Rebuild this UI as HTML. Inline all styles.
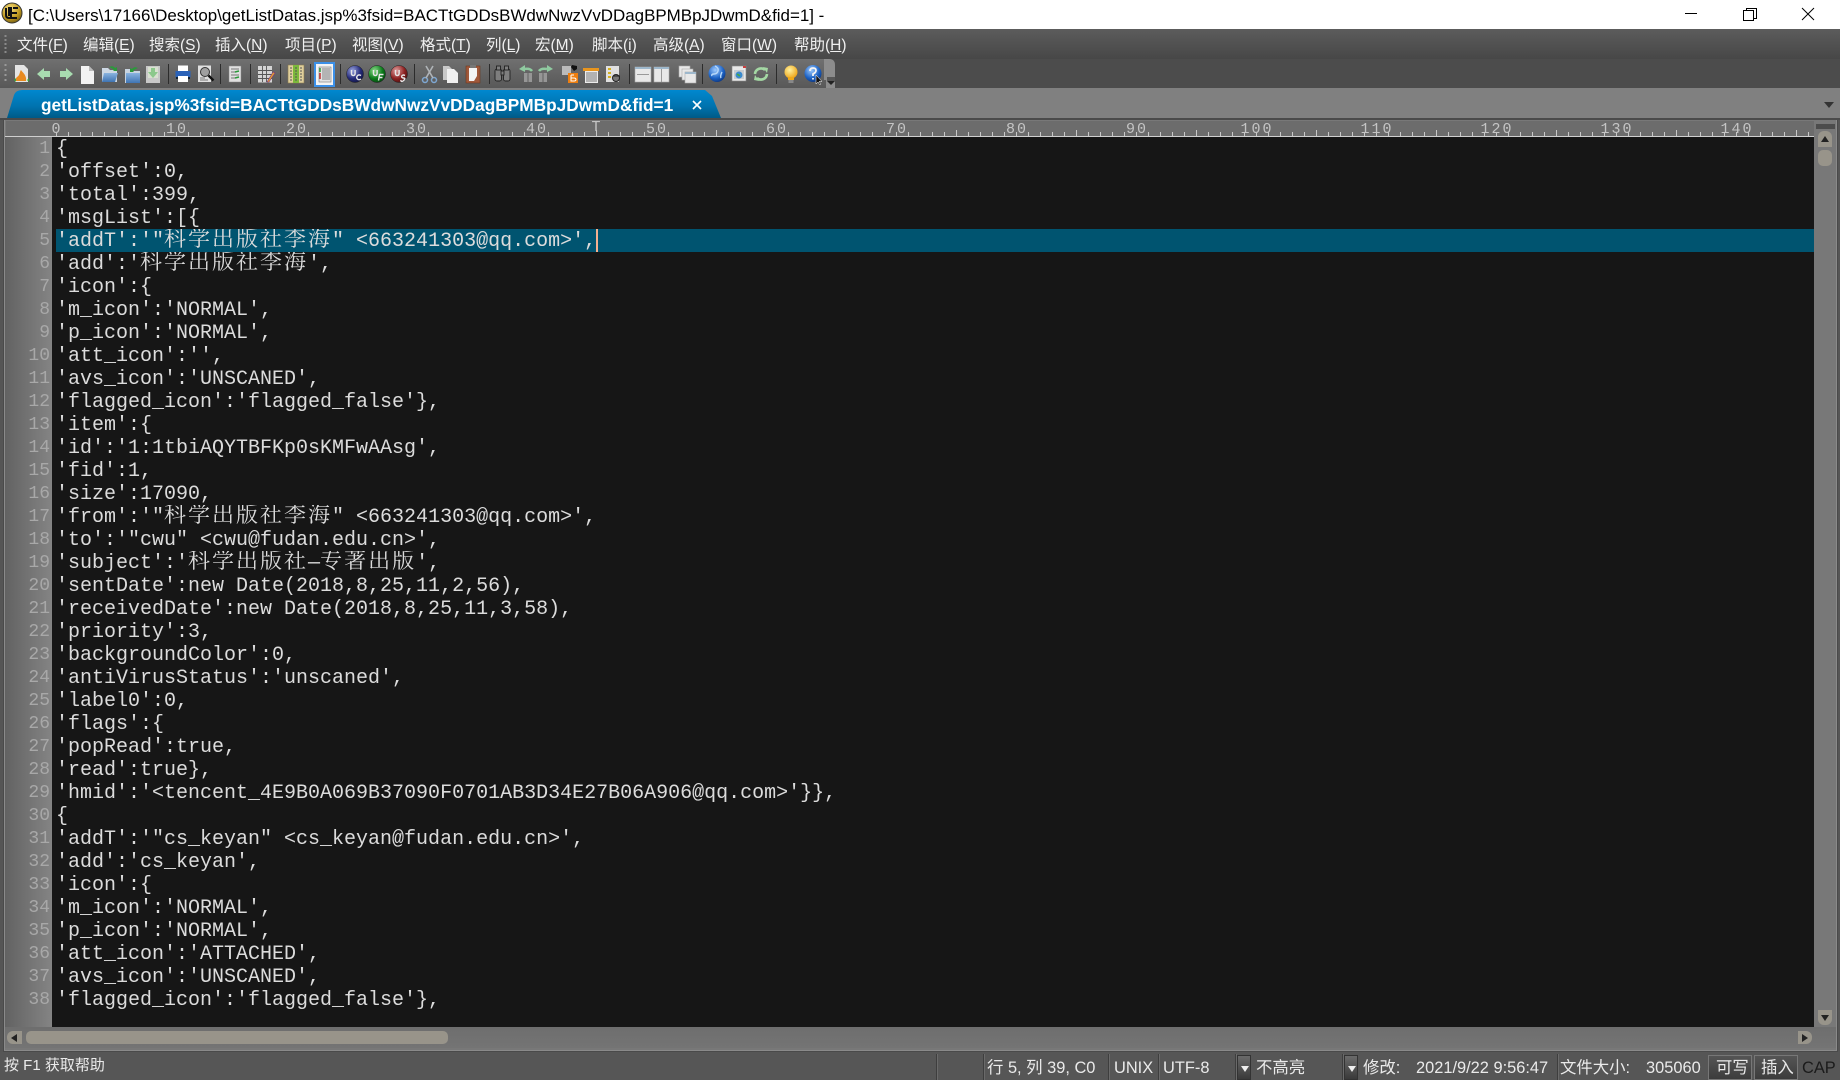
<!DOCTYPE html>
<html><head><meta charset="utf-8"><title>UltraEdit</title>
<style>
html,body{margin:0;padding:0;width:1840px;height:1080px;overflow:hidden;background:#555}
div,span{position:absolute}
.l span,.cj span,u,b{position:static}
#title{left:0;top:0;width:1840px;height:29px;background:#fff}
#ttext{left:28px;top:5px;font:16.95px/22px "Liberation Sans",sans-serif;color:#000;white-space:nowrap}
#menu{left:0;top:29px;width:1840px;height:30px;background:linear-gradient(#5c5c5c,#474747)}
.m{top:7px;font:15.5px/20px "Liberation Sans","Noto Sans CJK SC",sans-serif;color:#f0f0f0;white-space:nowrap}
.m u{text-underline-offset:1px}
#tb{left:0;top:59px;width:1840px;height:29px;background:#4c4c4c}
#tabbar{left:0;top:88px;width:1840px;height:30px;background:#808080}
#frame{left:3px;top:118px;width:1835px;height:934px;background:#787878;box-shadow:inset 0 0 0 1px #4a4a4a,inset 0 0 0 2px #8a8a8a}
#frametop{left:0;top:118px;width:1840px;height:2px;background:#4a4a4a}
#ruler{left:6px;top:121px;width:1808px;height:15px;background:#6c6c6c}
#rline{left:5px;top:136px;width:1809px;height:1px;background:#cfcfcf}
#ticks{left:56px;top:132px;width:1758px;height:4px;background:repeating-linear-gradient(90deg,#c8c8c8 0 1px,transparent 1px 12px)}
#ticks2{left:116px;top:130px;width:1698px;height:3px;background:repeating-linear-gradient(90deg,#c8c8c8 0 1px,transparent 1px 120px)}
.rn{top:122px;margin-left:1px;font:15px/15px "Liberation Mono",monospace;letter-spacing:2px;color:#c4c4c4;transform:translateX(-50%);white-space:nowrap}
#gutter{left:5px;top:137px;width:47px;height:890px;background:linear-gradient(90deg,#626262,#848484)}
#editor{left:52px;top:137px;width:1762px;height:890px;background:#161616}
#hl{left:56px;top:229px;width:1758px;height:23px;background:#005470}
#caret{left:596px;top:229px;width:2px;height:23px;background:#f4b090}
.n{left:5px;width:45px;height:23px;text-align:right;font:18px/25px "Liberation Mono",monospace;color:#a8a8a8}
.l{left:56px;height:24px;font:20px/25px "Liberation Mono",monospace;color:#dcdcdc;white-space:pre;overflow:hidden;-webkit-text-stroke:0}
.l span{font-family:"Noto Serif CJK SC",serif;font-size:22px;letter-spacing:2px;line-height:0}
#vtrack{left:1814px;top:121px;width:22px;height:906px;background:#787878}
#htrack{left:5px;top:1027px;width:1831px;height:21px;background:linear-gradient(#6e6e6e,#747474)}
.sb{background:#98948a;border-radius:5px}
#status{left:0;top:1052px;width:1840px;height:28px;background:#565656}
.s{top:5px;font:16.4px/22px "Liberation Sans","Noto Sans CJK SC",sans-serif;color:#eaeaea;white-space:nowrap}
.sep{top:2px;width:1px;height:26px;background:#3e3e3e;box-shadow:1px 0 0 #6a6a6a}
.dd{top:3px;width:14px;height:25px;background:linear-gradient(#6a6a6a,#3a3a3a);border:1px solid #333;box-sizing:border-box}
.dd:after{content:"";position:absolute;left:3px;top:10px;border:4px solid transparent;border-top:6px solid #eee}
.st{top:3px;height:25px;background:linear-gradient(#555,#3c3c3c);border:1px solid #777;box-sizing:border-box}
</style></head><body>
<div id="title">
<svg style="position:absolute;left:1px;top:2px" width="22" height="22" viewBox="0 0 22 22">
<defs><radialGradient id="ue" cx=".4" cy=".3" r=".8"><stop offset="0" stop-color="#f8e080"/><stop offset=".6" stop-color="#c09a20"/><stop offset="1" stop-color="#5c4a10"/></radialGradient></defs>
<circle cx="11" cy="11" r="10" fill="url(#ue)" stroke="#333" stroke-width="1"/>
<path d="M5 6v7c0 2 1 3 3 3h2V6H8v8M12 6h5M11 11h5M11 16h5" fill="none" stroke="#111" stroke-width="2"/>
</svg>
<div id="ttext">[C:\Users\17166\Desktop\getListDatas.jsp%3fsid=BACTtGDDsBWdwNwzVvDDagBPMBpJDwmD&amp;fid=1] -</div>
<svg style="position:absolute;left:1670px;top:0" width="170" height="29" viewBox="0 0 170 29" fill="none" stroke="#000" stroke-width="1">
<path d="M15 13.500h12"/>
<path d="M73.500 10.500h10v10h-10zM76.500 10V8.500h10v10H84"/>
<path d="M132 8l12 12M144 8l-12 12"/>
</svg>
</div>
<div id="menu">
<svg style="position:absolute;left:4px;top:5px" width="4" height="20"><path d="M1.500 1v20" stroke="#8a8a8a" stroke-width="2" stroke-dasharray="2 2"/></svg>
<div class="m" style="left:17px">文件(<u>F</u>)</div>
<div class="m" style="left:83px">编辑(<u>E</u>)</div>
<div class="m" style="left:149px">搜索(<u>S</u>)</div>
<div class="m" style="left:215px">插入(<u>N</u>)</div>
<div class="m" style="left:285px">项目(<u>P</u>)</div>
<div class="m" style="left:352px">视图(<u>V</u>)</div>
<div class="m" style="left:420px">格式(<u>T</u>)</div>
<div class="m" style="left:486px">列(<u>L</u>)</div>
<div class="m" style="left:535px">宏(<u>M</u>)</div>
<div class="m" style="left:592px">脚本(<u>i</u>)</div>
<div class="m" style="left:653px">高级(<u>A</u>)</div>
<div class="m" style="left:721px">窗口(<u>W</u>)</div>
<div class="m" style="left:794px">帮助(<u>H</u>)</div>
</div>
<div id="tb">
<svg style="position:absolute;left:0;top:0" width="840" height="29" viewBox="0 59 840 29">
<defs>
<linearGradient id="tbg" x1="0" y1="0" x2="0" y2="1"><stop offset="0" stop-color="#707070"/><stop offset="1" stop-color="#585858"/></linearGradient>
<linearGradient id="fold" x1="0" y1="0" x2="0" y2="1"><stop offset="0" stop-color="#8ab4e0"/><stop offset="1" stop-color="#3f74b4"/></linearGradient>
<radialGradient id="gb" cx=".35" cy=".3" r=".8"><stop offset="0" stop-color="#9aa4e0"/><stop offset=".6" stop-color="#242a78"/><stop offset="1" stop-color="#10143c"/></radialGradient>
<radialGradient id="gg" cx=".35" cy=".3" r=".8"><stop offset="0" stop-color="#8ada8a"/><stop offset=".6" stop-color="#0a7a1a"/><stop offset="1" stop-color="#064010"/></radialGradient>
<radialGradient id="gr" cx=".35" cy=".3" r=".8"><stop offset="0" stop-color="#e0a0a0"/><stop offset=".6" stop-color="#8c2020"/><stop offset="1" stop-color="#401010"/></radialGradient>
<radialGradient id="ge" cx=".4" cy=".3" r=".8"><stop offset="0" stop-color="#a0ccff"/><stop offset=".6" stop-color="#1c62c4"/><stop offset="1" stop-color="#0a2c70"/></radialGradient>
<radialGradient id="bulb" cx=".4" cy=".35" r=".7"><stop offset="0" stop-color="#fff2a0"/><stop offset="1" stop-color="#eda010"/></radialGradient>
</defs>
<path d="M0 59H829q5 0 5 5V88H0z" fill="url(#tbg)"/>
<path d="M824 59h5q6 0 6 6v23h-9v-8h-2z" fill="#8c8c8c"/>
<path d="M5.500 64v18" stroke="#999" stroke-width="2" stroke-dasharray="2 3"/>
<g stroke="#2c2c2c" stroke-width="1">
<path d="M168.500 64v20M220.500 64v20M250.500 64v20M280.500 64v20M310.500 64v20M340.500 64v20M414.500 64v20M489.500 64v20M629.500 64v20M702.500 64v20M776.500 64v20"/>
</g>
<!-- doc flame -->
<path d="M15 65h9l4 4v13H15z" fill="#e4e4e4"/><path d="M16 81c-1-4 2-4 3-6 1-2 1-4 2-5 1 2 6 5 5 11z" fill="#e88a20"/><path d="M14 80l2-2v4zM29 78l-2 2 2 2z" fill="#3aa53a"/>
<!-- arrows -->
<path d="M37 74l7-6v3h6v6h-6v3z" fill="#a8dcb0"/><path d="M73 74l-7-6v3h-6v6h6v3z" fill="#a8dcb0"/>
<!-- new doc -->
<path d="M81 66h8l5 5v13H81z" fill="#f2f2f2"/><path d="M89 66v5h5z" fill="#bbb"/>
<!-- folders -->
<path d="M102 68h6l2 2h7v12h-15z" fill="#cdd8e4"/><path d="M104 73h14l-3 9h-13z" fill="url(#fold)"/><path d="M109 67q4-2 6 1l2-1v4h-4l1-1q-2-2-5-3z" fill="#2a9a3a"/>
<path d="M125 69h5l1 2h9v12h-15z" fill="#c8d4e0"/><rect x="126" y="73" width="14" height="10" fill="url(#fold)"/><path d="M138 68q-4-2-6 1l-2-1v4h4l-1-1q2-2 5-3z" fill="#2a9a3a"/>
<!-- save -->
<rect x="146" y="66" width="14" height="17" fill="#c8c8c8"/><rect x="148" y="67" width="10" height="11" fill="#d8e0d0"/><path d="M151 68h4v4h3l-5 6-5-6h3z" fill="#8cc88c"/>
<!-- printer -->
<rect x="178" y="65.500" width="10" height="6" fill="#fff"/><rect x="175.500" y="71" width="15" height="6.500" fill="#2a62b8"/><rect x="178" y="76" width="10" height="6" fill="#fff"/><rect x="176" y="77" width="2" height="2" fill="#123"/><rect x="188" y="77" width="2" height="2" fill="#123"/>
<!-- preview -->
<rect x="198" y="65.500" width="13" height="16.500" fill="#e0e0e0"/><circle cx="205" cy="72" r="4.500" fill="#a0a0a0" stroke="#333"/><path d="M208.500 75.500l5 5" stroke="#111" stroke-width="2.400"/><path d="M200 80h8M200 78h5" stroke="#777"/>
<!-- format -->
<rect x="229" y="66" width="12" height="16" fill="#e0e0e0" stroke="#888" stroke-width=".5"/><path d="M231 69h8M231 72h5M231 75h8M231 78h5" stroke="#777"/><path d="M235 72l4-1M235 78l4-1" stroke="#2a9a3a" stroke-width="1.500"/>
<!-- column -->
<rect x="258" y="66" width="14" height="16.500" fill="#d4d4d4"/><path d="M258 70.500h14M258 74.500h14M258 78.500h14M262.500 66v16M266.500 66v16" stroke="#555" stroke-width=".9"/><path d="M267 82l6-10 2 1-6 9z" fill="#e0a030" stroke="#803080" stroke-width=".6"/>
<!-- columns green -->
<rect x="288" y="65" width="16" height="18" fill="#e0cf9c" stroke="#8a7a50" stroke-width=".6"/><rect x="293" y="65" width="6" height="18" fill="#7cb83c"/><path d="M290 68h2M290 71h2M290 74h2M290 77h2M290 80h2M295 68h2M295 71h2M295 74h2M295 77h2M295 80h2M300 68h2M300 71h2M300 74h2M300 77h2M300 80h2" stroke="#555" stroke-width="1"/>
<!-- active -->
<rect x="315" y="63" width="19" height="23" fill="#f4f4f4" stroke="#3c90e8" stroke-width="2"/>
<rect x="319" y="67" width="12" height="15" fill="#e4e4e4" stroke="#777" stroke-width=".6"/><path d="M322 69h8M322 71h8M322 73h8M322 75h8M322 77h8M322 79h8" stroke="#666" stroke-width=".8"/><path d="M320 68v4" stroke="#2a9a3a" stroke-width="1.500"/><path d="M320 73v6" stroke="#c03030" stroke-width="1.500"/>
<!-- balls -->
<g fill="none" stroke="#e8e8e8" stroke-width="1.400">
<circle cx="355" cy="74" r="8.500" fill="url(#gb)" stroke="#222" stroke-width=".5"/><path d="M351.500 70v3.500q0 2 1.800 2t1.800-2V70M361 75.500q-2.500-1.500-3.800.5t.8 3.500q1.800.4 3-.5"/>
<circle cx="377" cy="74" r="8.500" fill="url(#gg)" stroke="#222" stroke-width=".5"/><path d="M373.500 70v3.500q0 2 1.800 2t1.800-2V70M378.500 80.500l1-6h4M379 77.500h3.500"/>
<circle cx="399" cy="74" r="8.500" fill="url(#gr)" stroke="#222" stroke-width=".5"/><path d="M395.500 70v3.500q0 2 1.800 2t1.800-2V70M405 75.500q-2.500-1.200-3.200.5t1.800 2 0 2.500-2.800-.5"/>
</g>
<!-- scissors -->
<g fill="none" stroke="#7ea8d4" stroke-width="1.500"><circle cx="425" cy="80" r="2.500"/><circle cx="434" cy="80" r="2.500"/></g><path d="M426 78l7-12M433 78l-7-12" stroke="#b0b4b8" stroke-width="1.600"/>
<!-- copy -->
<path d="M443 66h6l4 4v10H443z" fill="#c8c8c8"/><path d="M447 69h7l4 4v10h-11z" fill="#f0f0f0"/>
<!-- paste -->
<rect x="466" y="66" width="14" height="17" fill="#a0583a" stroke="#6a3a20" stroke-width=".6"/><path d="M469 68h8v8l-3 5h-5z" fill="#f4f4f4"/><rect x="470" y="65" width="6" height="3" fill="#777"/>
<!-- binoculars -->
<g fill="#7e7e7e" stroke="#222" stroke-width=".9"><rect x="495" y="69" width="6.500" height="12" rx="2"/><rect x="503.500" y="69" width="6.500" height="12" rx="2"/><rect x="496.500" y="66" width="4" height="4"/><rect x="504.500" y="66" width="4" height="4"/><rect x="501" y="71" width="3" height="4"/></g>
<!-- find prev/next -->
<g fill="#969696"><rect x="524" y="73" width="3.500" height="9"/><rect x="528.500" y="73" width="3.500" height="9"/><rect x="539" y="73" width="3.500" height="9"/><rect x="543.500" y="73" width="3.500" height="9"/></g>
<path d="M532 71q-2-3-8-2" fill="none" stroke="#8fcaa0" stroke-width="2.500"/><path d="M525 65l-6 4 6 3z" fill="#8fcaa0"/>
<path d="M539 71q2-3 8-2" fill="none" stroke="#8fcaa0" stroke-width="2.500"/><path d="M547 65l6 4-6 3z" fill="#8fcaa0"/>
<!-- replace -->
<rect x="562" y="66" width="9" height="9" fill="#bbb"/><path d="M572 65l5 1v3l-3 2-3-4z" fill="#111"/><rect x="568" y="73" width="10" height="10" fill="#ee7f10"/><path d="M571 75v6h3q2 0 2-1.500t-2-1.500h-3M571 75h3" stroke="#fff" fill="none"/>
<!-- bookmark -->
<rect x="585" y="68" width="13" height="15" fill="#ececec"/><path d="M586 73h11M586 75h11M586 77h11M586 79h11M586 81h11" stroke="#777"/><rect x="583" y="68" width="16" height="3" fill="#e8951e"/>
<!-- find files -->
<rect x="606" y="66" width="13" height="16" fill="#e0e0e0"/><path d="M608 69h3M608 73h3M608 77h3" stroke="#d4b020" stroke-width="2"/><circle cx="616" cy="78" r="3.500" fill="#777" stroke="#222"/><path d="M613 76h7" stroke="#222"/>
<!-- window layouts -->
<g fill="#e8e8e8" stroke="#aaa" stroke-width=".6">
<rect x="635" y="67" width="16" height="15"/><rect x="654" y="67" width="15" height="15"/>
<rect x="679" y="66" width="11" height="11"/><rect x="682" y="69" width="11" height="11"/><rect x="685" y="72" width="11" height="11"/>
</g>
<g stroke="#999"><path d="M637 74.500h12M661.500 67v15"/></g>
<path d="M635 67h16v2h-16zM654 67h15v2h-15zM685 72h11v2h-11z" fill="#9eb8cc"/>
<!-- globe -->
<circle cx="717" cy="73.500" r="8.500" fill="url(#ge)"/><path d="M715 66q4 2 3 5t-4 3-2 2M722 72q-2 4-1 6" stroke="#b8d8f8" fill="none" stroke-width="1.400"/>
<!-- browser -->
<rect x="732" y="66" width="14" height="15" fill="#e8e8e8" stroke="#888" stroke-width=".6"/><rect x="734" y="70" width="10" height="9" fill="#c8ccd0"/><circle cx="739" cy="75" r="3.500" fill="#3a8ad0"/><path d="M737 74l3 2" stroke="#4aaa3a" stroke-width="1.500"/><rect x="743" y="66" width="3" height="2" fill="#c84040"/>
<!-- refresh -->
<path d="M755 74a6 6 0 0 1 10-4M767 74a6 6 0 0 1-10 4" fill="none" stroke="#a4d8a4" stroke-width="2.600"/><path d="M763 67l5 1-1 5zM759 81l-5-1 1-5z" fill="#a4d8a4"/>
<!-- bulb -->
<circle cx="791" cy="72" r="6.500" fill="url(#bulb)"/><path d="M788 77h6v3h-6z" fill="#f0a818"/><rect x="788.500" y="80" width="5" height="3" fill="#888"/>
<!-- help -->
<circle cx="813" cy="73.500" r="8.500" fill="url(#ge)"/><path d="M810 71q0-3 3-3t3 2.500q0 2-3 3.500v2M813 78v1.500" fill="none" stroke="#f4f4f4" stroke-width="1.800"/><path d="M816 75v9l2-2 2 3 1-1-2-2.500h3z" fill="#111" stroke="#fff" stroke-width=".5"/>
<!-- chevron -->
<path d="M827 78h8M827 80h8" stroke="#222"/><path d="M827 81h8l-4 4z" fill="#222"/>
</svg>
</div>
<div id="tabbar">
<svg style="position:absolute;left:0;top:0" width="740" height="30" viewBox="0 88 740 30">
<defs><linearGradient id="tab" x1="0" y1="0" x2="0" y2="1"><stop offset="0" stop-color="#0088cf"/><stop offset=".6" stop-color="#0072ad"/><stop offset="1" stop-color="#005a86"/></linearGradient></defs>
<path d="M7 118L14 95Q16 90 22 90H705L712 96 721 118z" fill="url(#tab)"/>
</svg>
<div style="left:41px;top:6px;font:bold 17.28px/22px 'Liberation Sans',sans-serif;color:#fff;white-space:nowrap">getListDatas.jsp%3fsid=BACTtGDDsBWdwNwzVvDDagBPMBpJDwmD&amp;fid=1</div>
<svg style="position:absolute;left:692px;top:12px" width="10" height="10"><path d="M1 1l8 8M9 1l-8 8" stroke="#fff" stroke-width="1.600"/></svg>
<div style="left:1824px;top:14px;width:0;height:0;border-left:5px solid transparent;border-right:5px solid transparent;border-top:6px solid #333"></div>
</div>
<div id="frame"></div>
<div id="frametop"></div>
<div id="ruler"></div>
<div id="ticks"></div><div id="ticks2"></div><div id="rline"></div>
<div class="rn" style="left:56px">0</div>
<div class="rn" style="left:176px">10</div><div class="rn" style="left:296px">20</div><div class="rn" style="left:416px">30</div><div class="rn" style="left:536px">40</div><div class="rn" style="left:596px;top:120px">T</div><div class="rn" style="left:656px">50</div><div class="rn" style="left:776px">60</div><div class="rn" style="left:896px">70</div><div class="rn" style="left:1016px">80</div><div class="rn" style="left:1136px">90</div><div class="rn" style="left:1256px">100</div><div class="rn" style="left:1376px">110</div><div class="rn" style="left:1496px">120</div><div class="rn" style="left:1616px">130</div><div class="rn" style="left:1736px">140</div>
<div id="gutter"></div>
<div id="editor"></div>
<div id="hl"></div>
<div class="n" style="top:137px">1</div><div class="n" style="top:160px">2</div><div class="n" style="top:183px">3</div><div class="n" style="top:206px">4</div><div class="n" style="top:229px">5</div><div class="n" style="top:252px">6</div><div class="n" style="top:275px">7</div><div class="n" style="top:298px">8</div><div class="n" style="top:321px">9</div><div class="n" style="top:344px">10</div><div class="n" style="top:367px">11</div><div class="n" style="top:390px">12</div><div class="n" style="top:413px">13</div><div class="n" style="top:436px">14</div><div class="n" style="top:459px">15</div><div class="n" style="top:482px">16</div><div class="n" style="top:505px">17</div><div class="n" style="top:528px">18</div><div class="n" style="top:551px">19</div><div class="n" style="top:574px">20</div><div class="n" style="top:597px">21</div><div class="n" style="top:620px">22</div><div class="n" style="top:643px">23</div><div class="n" style="top:666px">24</div><div class="n" style="top:689px">25</div><div class="n" style="top:712px">26</div><div class="n" style="top:735px">27</div><div class="n" style="top:758px">28</div><div class="n" style="top:781px">29</div><div class="n" style="top:804px">30</div><div class="n" style="top:827px">31</div><div class="n" style="top:850px">32</div><div class="n" style="top:873px">33</div><div class="n" style="top:896px">34</div><div class="n" style="top:919px">35</div><div class="n" style="top:942px">36</div><div class="n" style="top:965px">37</div><div class="n" style="top:988px">38</div>
<div class="l" style="top:137px">{</div>
<div class="l" style="top:160px">'offset':0,</div>
<div class="l" style="top:183px">'total':399,</div>
<div class="l" style="top:206px">'msgList':[{</div>
<div class="l" style="top:229px">'addT':'"<span>科学出版社李海</span>" &lt;663241303@qq.com&gt;',</div>
<div class="l" style="top:252px">'add':'<span>科学出版社李海</span>',</div>
<div class="l" style="top:275px">'icon':{</div>
<div class="l" style="top:298px">'m_icon':'NORMAL',</div>
<div class="l" style="top:321px">'p_icon':'NORMAL',</div>
<div class="l" style="top:344px">'att_icon':'',</div>
<div class="l" style="top:367px">'avs_icon':'UNSCANED',</div>
<div class="l" style="top:390px">'flagged_icon':'flagged_false'},</div>
<div class="l" style="top:413px">'item':{</div>
<div class="l" style="top:436px">'id':'1:1tbiAQYTBFKp0sKMFwAAsg',</div>
<div class="l" style="top:459px">'fid':1,</div>
<div class="l" style="top:482px">'size':17090,</div>
<div class="l" style="top:505px">'from':'"<span>科学出版社李海</span>" &lt;663241303@qq.com&gt;',</div>
<div class="l" style="top:528px">'to':'"cwu" &lt;cwu@fudan.edu.cn&gt;',</div>
<div class="l" style="top:551px">'subject':'<span>科学出版社</span>—<span>专著出版</span>',</div>
<div class="l" style="top:574px">'sentDate':new Date(2018,8,25,11,2,56),</div>
<div class="l" style="top:597px">'receivedDate':new Date(2018,8,25,11,3,58),</div>
<div class="l" style="top:620px">'priority':3,</div>
<div class="l" style="top:643px">'backgroundColor':0,</div>
<div class="l" style="top:666px">'antiVirusStatus':'unscaned',</div>
<div class="l" style="top:689px">'label0':0,</div>
<div class="l" style="top:712px">'flags':{</div>
<div class="l" style="top:735px">'popRead':true,</div>
<div class="l" style="top:758px">'read':true},</div>
<div class="l" style="top:781px">'hmid':'&lt;tencent_4E9B0A069B37090F0701AB3D34E27B06A906@qq.com&gt;'}},</div>
<div class="l" style="top:804px">{</div>
<div class="l" style="top:827px">'addT':'"cs_keyan" &lt;cs_keyan@fudan.edu.cn&gt;',</div>
<div class="l" style="top:850px">'add':'cs_keyan',</div>
<div class="l" style="top:873px">'icon':{</div>
<div class="l" style="top:896px">'m_icon':'NORMAL',</div>
<div class="l" style="top:919px">'p_icon':'NORMAL',</div>
<div class="l" style="top:942px">'att_icon':'ATTACHED',</div>
<div class="l" style="top:965px">'avs_icon':'UNSCANED',</div>
<div class="l" style="top:988px">'flagged_icon':'flagged_false'},</div>
<div id="caret"></div>
<div id="vtrack"></div>
<div style="left:1815px;top:123px;width:19px;height:5px;background:#4c4c4c;border:1px solid #777;box-sizing:content-box"></div>
<div class="sb" style="left:1818px;top:131px;width:14px;height:16px;border-radius:6px 6px 0 0"></div>
<div style="left:1821px;top:136px;width:0;height:0;border-left:4px solid transparent;border-right:4px solid transparent;border-bottom:6px solid #222"></div>
<div class="sb" style="left:1818px;top:150px;width:14px;height:16px"></div>
<div class="sb" style="left:1818px;top:1010px;width:14px;height:15px;border-radius:0 0 6px 6px"></div>
<div style="left:1821px;top:1015px;width:0;height:0;border-left:4px solid transparent;border-right:4px solid transparent;border-top:6px solid #222"></div>
<div id="htrack"></div>
<div class="sb" style="left:7px;top:1031px;width:15px;height:13px;border-radius:6px 0 0 6px"></div>
<div style="left:11px;top:1034px;width:0;height:0;border-top:4px solid transparent;border-bottom:4px solid transparent;border-right:6px solid #222"></div>
<div class="sb" style="left:26px;top:1031px;width:422px;height:13px"></div>
<div class="sb" style="left:1798px;top:1031px;width:14px;height:13px;border-radius:0 6px 6px 0"></div>
<div style="left:1802px;top:1034px;width:0;height:0;border-top:4px solid transparent;border-bottom:4px solid transparent;border-left:6px solid #222"></div>
<div id="status">
<div class="s" style="left:4px;top:3px;font-size:15px">按 F1 获取帮助</div>
<div class="sep" style="left:936px"></div><div class="sep" style="left:983px"></div><div class="sep" style="left:1108px"></div><div class="sep" style="left:1158px"></div><div class="sep" style="left:1235px"></div><div class="sep" style="left:1342px"></div><div class="sep" style="left:1557px"></div>
<div class="s" style="left:987px">行 5, 列 39, C0</div>
<div class="s" style="left:1114px">UNIX</div>
<div class="s" style="left:1163px">UTF-8</div>
<div class="dd" style="left:1237px"></div>
<div class="s" style="left:1256px">不高亮</div>
<div class="dd" style="left:1344px"></div>
<div class="s" style="left:1363px">修改:</div>
<div class="s" style="left:1416px">2021/9/22 9:56:47</div>
<div class="s" style="left:1560px">文件大小:</div>
<div class="s" style="left:1646px">305060</div>
<div class="st" style="left:1708px;width:44px"></div>
<div class="s" style="left:1716px">可写</div>
<div class="st" style="left:1754px;width:44px"></div>
<div class="s" style="left:1761px">插入</div>
<div class="s" style="left:1802px;color:#1b1b1b">CAP</div>
</div>
</body></html>
